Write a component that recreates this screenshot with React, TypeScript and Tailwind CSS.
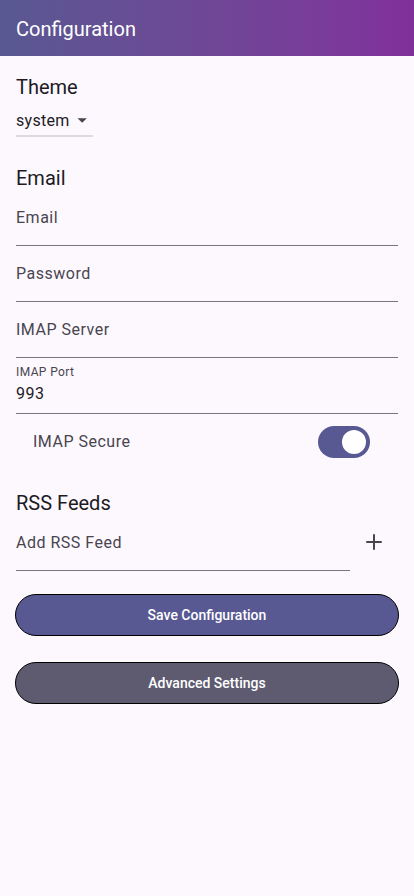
import { Plus } from "lucide-react";

function Field({ label, value }: { label: string; value?: string }) {
  if (value) {
    return (
      <div className="h-[56px] border-b border-[#79747e] flex flex-col pt-[6px]">
        <span className="text-[12px] leading-4 text-[#49454f] tracking-[0.4px]">{label}</span>
        <span className="mt-[2px] text-[16px] leading-6 text-[#1c1b1f] tracking-[0.5px]">{value}</span>
      </div>
    );
  }
  return (
    <div className="h-[56px] border-b border-[#79747e] flex flex-col justify-center">
      <span className="text-[16px] leading-6 text-[#49454f] tracking-[0.5px]">{label}</span>
    </div>
  );
}

export default function App() {
  return (
    <div
      className="min-h-[896px] bg-[#fcf8fe] text-[#1c1b1f]"
      style={{ fontFamily: "Roboto, 'Liberation Sans', sans-serif" }}
    >
      {/* header */}
      <div className="h-14 flex items-center px-4 bg-gradient-to-r from-[#585892] to-[#81309b]">
        <h1 className="text-white text-[20px] font-normal pt-[1px]">Configuration</h1>
      </div>

      <div className="px-4 pt-[15px]">
        {/* Theme */}
        <h2 className="text-[20px] leading-8 text-[#1c1b1f]">Theme</h2>
        <div className="mt-[6px] w-[77px] border-b-2 border-[#dcdadd] h-[28px] flex items-start">
          <span className="text-[16px] leading-6 tracking-[0.3px]">system</span>
          <svg width="24" height="24" viewBox="0 0 24 24" className="ml-[1px] -mt-[1px]">
            <path d="M7 10l5 5 5-5z" fill="#49454f" />
          </svg>
        </div>

        {/* Email */}
        <h2 className="text-[20px] leading-8 mt-[25px]">Email</h2>
        <div className="-mt-[4px]">
          <Field label="Email" />
          <Field label="Password" />
          <Field label="IMAP Server" />
          <Field label="IMAP Port" value="993" />
        </div>

        <div className="h-[56px] flex items-center justify-between pl-[17px] pr-[28px]">
          <span className="text-[16px] text-[#49454f] tracking-[0.5px]">IMAP Secure</span>
          <div className="w-[52px] h-[32px] rounded-full bg-[#585892] flex items-center justify-end pr-[4px]">
            <div className="w-6 h-6 rounded-full bg-white" />
          </div>
        </div>

        {/* RSS */}
        <h2 className="text-[20px] leading-8 mt-[17px]">RSS Feeds</h2>
        <div className="flex items-center -mt-[4px]">
          <div className="w-[334px] h-[56px] border-b border-[#79747e] flex items-center">
            <span className="text-[16px] text-[#49454f] tracking-[0.5px]">Add RSS Feed</span>
          </div>
          <div className="flex-1 flex justify-center -mt-[2px]">
            <Plus className="w-6 h-6 text-[#49454f]" strokeWidth={2} />
          </div>
        </div>

        <div className="mt-[23px] -mx-[1px] flex flex-col gap-[26px]">
          <button className="h-[42px] w-full rounded-full border border-black bg-[#585892] text-white text-[14px] font-medium">
            Save Configuration
          </button>
          <button className="h-[42px] w-full rounded-full border border-black bg-[#5e5b71] text-white text-[14px] font-medium">
            Advanced Settings
          </button>
        </div>
      </div>
    </div>
  );
}
